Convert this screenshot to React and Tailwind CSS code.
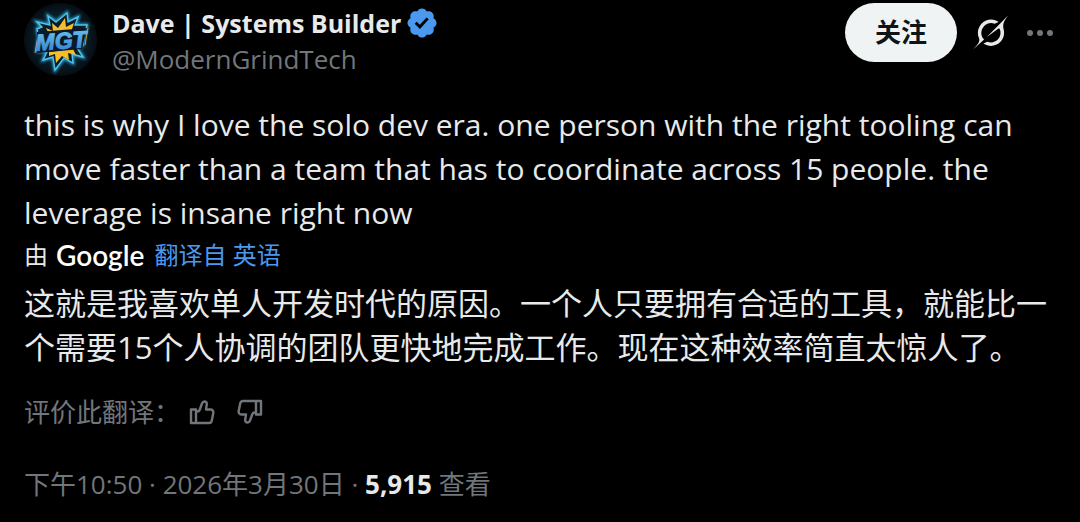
import React from 'react';

const BADGE_PATH =
  'M20.396 11c-.018-.646-.215-1.275-.57-1.816-.354-.54-.852-.972-1.438-1.246.223-.607.27-1.264.14-1.897-.131-.634-.437-1.218-.882-1.687-.47-.445-1.053-.75-1.687-.882-.633-.13-1.29-.083-1.897.14-.273-.587-.704-1.086-1.245-1.44S11.647 1.62 11 1.604c-.646.017-1.273.213-1.813.568s-.969.854-1.24 1.44c-.608-.223-1.267-.272-1.902-.14-.635.13-1.22.436-1.69.882-.445.47-.749 1.055-.878 1.688-.13.633-.08 1.29.144 1.896-.587.274-1.087.705-1.443 1.245-.356.54-.555 1.17-.574 1.817.02.647.218 1.276.574 1.817.356.54.856.972 1.443 1.245-.224.606-.274 1.263-.144 1.896.13.634.433 1.218.877 1.688.47.443 1.054.747 1.687.878.633.132 1.29.084 1.897-.136.274.586.705 1.084 1.246 1.439.54.354 1.17.551 1.816.569.647-.016 1.276-.213 1.817-.567s.972-.854 1.245-1.44c.604.239 1.266.296 1.903.164.636-.132 1.22-.447 1.68-.907.46-.46.776-1.044.908-1.681s.075-1.299-.165-1.903c.586-.274 1.084-.705 1.439-1.246.354-.54.551-1.17.569-1.816zM9.662 14.85l-3.429-3.428 1.293-1.302 2.072 2.072 4.4-4.794 1.347 1.246z';

const GROK_PATH =
  'M12.745 20.54l10.97-8.19c.539-.4 1.307-.244 1.564.38 1.349 3.288.746 7.241-1.938 9.955-2.683 2.714-6.417 3.31-9.83 1.954l-3.728 1.745c5.347 3.697 11.84 2.782 15.898-1.324 3.219-3.255 4.216-7.692 3.284-11.693l.008.009c-1.351-5.878.332-8.227 3.782-13.031L33 0l-4.54 4.59v-.014L12.743 20.544m-2.263 1.987c-3.837-3.707-3.175-9.446.1-12.755 2.42-2.449 6.388-3.448 9.852-1.979l3.72-1.737c-.67-.49-1.53-1.017-2.515-1.387-4.455-1.854-9.789-.931-13.41 2.728-3.483 3.523-4.579 8.94-2.697 13.561 1.405 3.454-.899 5.898-3.22 8.364C1.49 30.2.666 31.074 0 32l10.478-9.466';

const BURST_PATH =
  'M13 19l13 3-2-9 8 6 11-9 1 9 10-5-3 8 12 0-3 11-1 9-6 3 6 9-11-3 1 9-9-5-9 12-2-13-10 3 4-8-10-1 2-13-2-9 5-2z';

function Avatar() {
  return (
    <svg viewBox="0 0 73 73" className="size-[73px] shrink-0" role="img" aria-label="MGT">
      <defs>
        <radialGradient id="disc">
          <stop offset="0" stopColor="#12384a" />
          <stop offset="0.6" stopColor="#0a202c" />
          <stop offset="1" stopColor="#060d13" />
        </radialGradient>
        <linearGradient id="letters" x1="0" y1="0" x2="0" y2="1">
          <stop offset="0" stopColor="#6cc4f2" />
          <stop offset="1" stopColor="#2f7fd0" />
        </linearGradient>
        <filter id="glow" x="-20%" y="-20%" width="140%" height="140%">
          <feGaussianBlur stdDeviation="1.6" />
        </filter>
      </defs>
      <circle cx="36.5" cy="36.5" r="36.5" fill="url(#disc)" />
      <path d={BURST_PATH} fill="none" stroke="#2aa8d8" strokeWidth="3" filter="url(#glow)" />
      <path d={BURST_PATH} fill="#0b1c2a" stroke="#4fc3e8" strokeWidth="1.4" />
      <path d="M11 50l3-17M64 25l-3 17" stroke="#b99a35" strokeWidth="1" />
      <path
        d="M22 25l7 3-1-8 6 5 7-10 1 9 8-4-3 9H24zM25 49l24-3 3 6-8-2 1 7-7-4-6 7-1-9-6 2z"
        fill="#f5bd27"
      />
      <path d="M13 29l50-4-5 21-45 4z" fill="#0a1a2b" />
      <text
        x="37"
        y="46"
        textAnchor="middle"
        transform="rotate(-4 36 38)"
        fill="url(#letters)"
        stroke="url(#letters)"
        strokeWidth="1"
        className="font-['Liberation_Sans_Narrow','Liberation_Sans',sans-serif] text-[23px] font-bold italic"
      >
        MGT
      </text>
    </svg>
  );
}

function ThumbIcon({ down }) {
  return (
    <svg
      viewBox="0 0 26 26"
      className={down ? 'size-[26px] rotate-180' : 'size-[26px]'}
      fill="none"
      stroke="currentColor"
      strokeWidth="2.4"
      strokeLinejoin="round"
      aria-hidden="true"
    >
      <path d="M2 10.500h5V24H2zM7 12.500h1.500c1 0 1.700-.6 2.100-1.500L13 4.500c.5-1.300 1.200-2 2.500-2 1.500 0 2.500 1.200 2.300 2.700l-.8 5.300h4.500c1.900 0 3.200 1.600 2.800 3.400l-1.500 7.500C22.500 23 21.500 24 20 24H7" />
    </svg>
  );
}

function Header() {
  return (
    <header className="flex items-start justify-between">
      <div className="flex gap-[15px]">
        <Avatar />
        <div>
          <div className="flex items-center gap-1">
            <h1 className="text-[25px] leading-10 font-bold">Dave | Systems Builder</h1>
            <svg viewBox="0 0 22 22" className="size-[34px]" fill="#4a99ee" role="img" aria-label="认证账号">
              <path d={BADGE_PATH} />
            </svg>
          </div>
          <a href="#profile" className="block text-[26px] leading-8 text-[#71767b]">
            @ModernGrindTech
          </a>
        </div>
      </div>

      <div className="flex items-center gap-4">
        <button className="h-[59px] rounded-full bg-[#eff3f4] px-[30px] text-[26px] font-bold text-[#0f1419]">
          关注
        </button>
        <button aria-label="Grok">
          <svg viewBox="0 0 33 32" className="size-[35px]" fill="#e7e9ea">
            <path d={GROK_PATH} />
          </svg>
        </button>
        <button aria-label="更多" className="px-[3px] text-[#71767b]">
          <svg viewBox="0 0 26 6" className="h-[6px] w-[26px]" fill="currentColor">
            <circle cx="3" cy="3" r="3" />
            <circle cx="13" cy="3" r="3" />
            <circle cx="23" cy="3" r="3" />
          </svg>
        </button>
      </div>
    </header>
  );
}

export default function App() {
  return (
    <main className="min-h-screen bg-black px-6 pt-[3px] pb-4 font-['Open_Sans','Noto_Sans_CJK_SC',sans-serif] text-[#e7e9ea]">
      <Header />

      <article>
        <p className="mt-[27px] text-[30px] leading-[44px]">
          this is why I love the solo dev era. one person with the right tooling can move faster than a
          team that has to coordinate across 15 people. the leverage is insane right now
        </p>

        <div className="flex h-10 items-center text-[24px]">
          <span>由</span>
          <span className="ml-2 font-['Lato',sans-serif] text-[28px] leading-8 font-semibold text-white">
            Google
          </span>
          <a href="#translation" className="ml-[10px] text-[#4a99ee]">
            翻译自 英语
          </a>
        </div>

        <p lang="zh" className="mt-[6px] text-[31px] leading-[44px]">
          这就是我喜欢单人开发时代的原因。一个人只要拥有合适的工具，就能比一个需要15个人协调的团队更快地完成工作。现在这种效率简直太惊人了。
        </p>

        <div className="mt-[23px] flex h-10 items-center text-[26px] text-[#71767b]">
          <span>评价此翻译：</span>
          <button aria-label="赞" className="ml-[9px]">
            <ThumbIcon />
          </button>
          <button aria-label="踩" className="ml-[22px]">
            <ThumbIcon down />
          </button>
        </div>
      </article>

      <footer className="mt-8 text-[26px] leading-10 text-[#71767b]">
        <a href="#status">
          <time dateTime="2026-03-30T22:50">下午10:50 · 2026年3月30日</time>
        </a>
        <span> · </span>
        <strong className="font-bold text-[#e7e9ea]">5,915</strong> 查看
      </footer>
    </main>
  );
}
